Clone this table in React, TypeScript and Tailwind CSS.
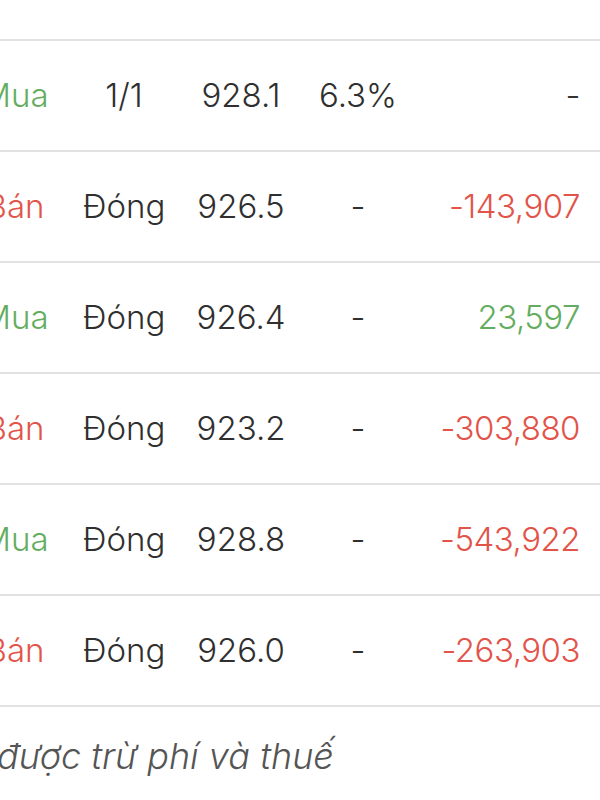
const rows = [
  { side: "Mua", status: "1/1", price: "928.1", pct: "6.3%", pnl: "-" },
  { side: "Bán", status: "Đóng", price: "926.5", pct: "-", pnl: "-143,907" },
  { side: "Mua", status: "Đóng", price: "926.4", pct: "-", pnl: "23,597" },
  { side: "Bán", status: "Đóng", price: "923.2", pct: "-", pnl: "-303,880" },
  { side: "Mua", status: "Đóng", price: "928.8", pct: "-", pnl: "-543,922" },
  { side: "Bán", status: "Đóng", price: "926.0", pct: "-", pnl: "-263,903" },
];

function pnlColor(v: string) {
  if (v === "-") return "text-[#333333]";
  return v.startsWith("-") ? "text-[#e2544a]" : "text-[#64ad60]";
}

export default function App() {
  return (
    <div
      className="h-[800px] w-[600px] overflow-hidden bg-white text-[33px] font-light text-[#2f2f2f]"
      style={{ fontFamily: "Inter, 'Noto Sans', sans-serif" }}
    >
      <div className="h-[41px] border-b-2 border-[#e2e2e2]" />
      {rows.map((r, i) => (
        <div
          key={i}
          className="grid h-[111px] grid-cols-[30px_188px_46px_188px_minmax(0,1fr)] items-center border-b-2 border-[#e2e2e2] pr-5"
        >
          <div
            className={`flex justify-center whitespace-nowrap ${
              r.side === "Mua" ? "text-[#64ad60]" : "text-[#e2544a]"
            }`}
          >
            {r.side}
          </div>
          <div className="flex justify-center whitespace-nowrap">{r.status}</div>
          <div className="flex justify-center whitespace-nowrap">{r.price}</div>
          <div className="flex justify-center whitespace-nowrap">{r.pct}</div>
          <div className={`whitespace-nowrap text-right tracking-[-0.5px] ${pnlColor(r.pnl)}`}>
            <span className="float-right">{r.pnl}</span>
          </div>
        </div>
      ))}
      <p className="-ml-[3px] pt-[22px] text-[36px] italic whitespace-nowrap text-[#555555]">
        được trừ phí và thuế
      </p>
    </div>
  );
}
